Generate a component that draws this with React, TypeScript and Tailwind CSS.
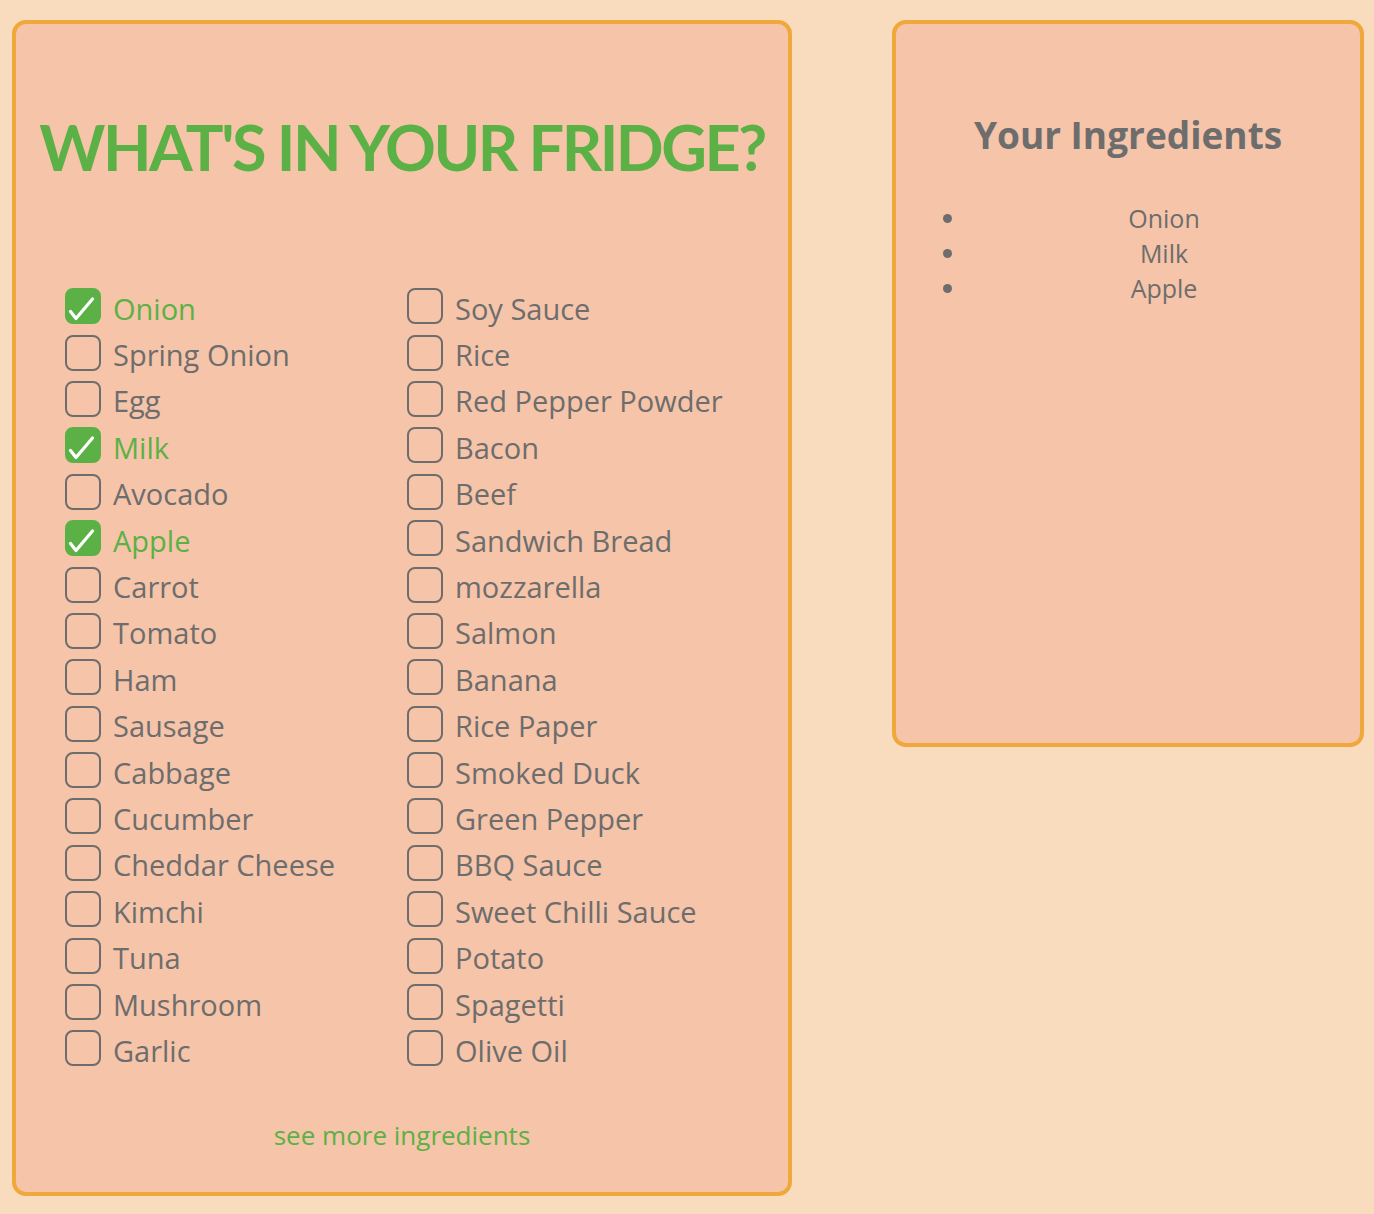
import { useState } from "react"

const LEFT = [
  "Onion", "Spring Onion", "Egg", "Milk", "Avocado", "Apple", "Carrot", "Tomato", "Ham",
  "Sausage", "Cabbage", "Cucumber", "Cheddar Cheese", "Kimchi", "Tuna", "Mushroom", "Garlic",
]
const RIGHT = [
  "Soy Sauce", "Rice", "Red Pepper Powder", "Bacon", "Beef", "Sandwich Bread", "mozzarella",
  "Salmon", "Banana", "Rice Paper", "Smoked Duck", "Green Pepper", "BBQ Sauce",
  "Sweet Chilli Sauce", "Potato", "Spagetti", "Olive Oil",
]

function CheckItem({ name, checked, onToggle }: { name: string; checked: boolean; onToggle: () => void }) {
  return (
    <label className="flex h-[46.4px] items-center cursor-pointer select-none" onClick={onToggle}>
      <span
        className={`relative h-[36px] w-[36px] shrink-0 rounded-[8px] border-2 ${
          checked ? "border-[#5bb146] bg-[#5bb146]" : "border-[#6d6d6d]"
        }`}
      >
        {checked && (
          <svg viewBox="0 0 36 36" className="absolute -left-[2px] -top-[2px] h-[36px] w-[36px]" fill="none">
            <path d="M5.5 23.5L11 30.5L27.5 11" stroke="#fff" strokeWidth="3.2" strokeLinecap="round" strokeLinejoin="round" />
          </svg>
        )}
      </span>
      <span className={`ml-[12px] text-[29px] leading-none pt-[4px] ${checked ? "text-[#5bb146]" : "text-[#6d6d6d]"}`}>
        {name}
      </span>
    </label>
  )
}

export default function App() {
  const [picked, setPicked] = useState<string[]>(["Onion", "Milk", "Apple"])

  const toggle = (name: string) =>
    setPicked((p) => (p.includes(name) ? p.filter((x) => x !== name) : [...p, name]))

  return (
    <div className="min-h-[1214px] bg-[#f9dbbd] font-['Open_Sans',sans-serif]">
      <div className="flex items-start gap-[100px] pl-[12px] pt-[20px]">
        <section className="w-[780px] h-[1176px] rounded-[14px] border-4 border-[#f0a83c] bg-[#f6c4a8]">
          <h1 className="mt-[91px] whitespace-nowrap text-center font-['Lato',sans-serif] text-[63px] font-bold leading-none tracking-[-2.5px] text-[#5bb146]">
            WHAT'S IN YOUR FRIDGE?
          </h1>
          <div className="mt-[105px] grid grid-cols-2 pl-[49px] pr-[39px]">
            <div>
              {LEFT.map((n) => (
                <CheckItem key={n} name={n} checked={picked.includes(n)} onToggle={() => toggle(n)} />
              ))}
            </div>
            <div>
              {RIGHT.map((n) => (
                <CheckItem key={n} name={n} checked={picked.includes(n)} onToggle={() => toggle(n)} />
              ))}
            </div>
          </div>
          <div className="mt-[44px] text-center">
            <a href="#" className="text-[26px] text-[#5bb146]">
              see more ingredients
            </a>
          </div>
        </section>

        <aside className="w-[472px] h-[727px] rounded-[14px] border-4 border-[#f0a83c] bg-[#f6c4a8]">
          <h2 className="mt-[92px] text-center text-[37px] font-bold leading-none text-[#6d6d6d]">Your Ingredients</h2>
          <ul className="mt-[48px] list-disc pl-[72px] text-[25px] leading-[35px] text-[#6d6d6d]">
            {picked.map((n) => (
              <li key={n} className="text-center">
                {n}
              </li>
            ))}
          </ul>
        </aside>
      </div>
    </div>
  )
}
